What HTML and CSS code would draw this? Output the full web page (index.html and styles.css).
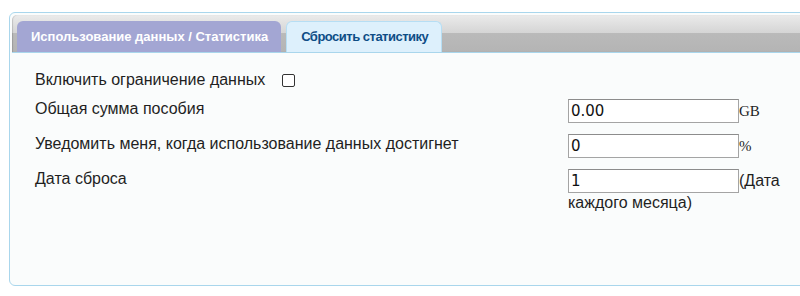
FILE: index.html
```html
<!DOCTYPE html>
<html lang="ru">
<head>
    <meta charset="UTF-8">
    <meta name="viewport" content="width=device-width, initial-scale=1.0">
    <title>Использование данных</title>
    <link rel="stylesheet" href="styles.css">
</head>
<body>
    <div class="panel">
        <div class="tab-bar">
            <a href="#" class="tab tab-active">Использование данных / Статистика</a>
            <a href="#" class="tab tab-plain">Сбросить статистику</a>
        </div>

        <form class="content">
            <div class="row row-first">
                <label class="row-label" for="limit">Включить ограничение данных <input type="checkbox" id="limit" class="check"></label>
                <div></div>
            </div>

            <div class="row">
                <label class="row-label" for="total">Общая сумма пособия</label>
                <div class="row-value"><input type="text" id="total" class="field" value="0.00"><span class="unit">GB</span></div>
            </div>

            <div class="row">
                <label class="row-label" for="notify">Уведомить меня, когда использование данных достигнет</label>
                <div class="row-value"><input type="text" id="notify" class="field" value="0"><span class="unit">%</span></div>
            </div>

            <div class="row">
                <label class="row-label" for="reset">Дата сброса</label>
                <div class="row-value"><input type="text" id="reset" class="field" value="1">(Дата каждого месяца)</div>
            </div>
        </form>
    </div>
</body>
</html>
```

FILE: styles.css
```css
* {
    margin: 0;
    padding: 0;
    box-sizing: border-box;
}

body {
    font-family: "Liberation Sans", Arial, sans-serif;
    background: #ffffff;
    color: #1f1f1f;
    overflow: hidden;
}

/* рамка панели */
.panel {
    width: 830px;
    height: 274px;
    margin: 12px 0 0 9px;
    padding: 2px;
    border: 1px solid #a9d6ec;
    border-radius: 6px;
    background: #fafcfc;
}

/* вкладки */
.tab-bar {
    height: 38px;
    display: flex;
    align-items: flex-end;
    gap: 5px;
    padding-left: 5px;
    border-radius: 5px 5px 0 0;
    border-bottom: 1px solid #a9d6ec;
    background: linear-gradient(#ebebeb, #d5d5d5 48%, #bababa 49%, #b4b4b4);
    box-shadow: inset 1px 0 1px rgba(0, 0, 0, 0.15);
}

.tab {
    height: 31px;
    line-height: 32px;
    padding: 0 13px 0 14px;
    border-radius: 6px 6px 0 0;
    font-size: 13px;
    font-weight: bold;
    text-decoration: none;
    white-space: nowrap;
}

.tab-active {
    background: #a3a6d3;
    color: #ffffff;
}

.tab-plain {
    background: #ddf0fc;
    color: #0e4d86;
    border: 1px solid #b6def4;
    border-bottom: none;
    line-height: 30px;
    letter-spacing: -0.5px;
}

/* форма */
.content {
    padding: 17px 0 0 23px;
}

.row {
    display: grid;
    grid-template-columns: 533px 222px;
    margin-bottom: 11px;
    font-size: 16px;
    line-height: 20px;
}

.row-first {
    margin-bottom: 9px;
}

.row-label {
    display: flex;
    align-items: center;
    gap: 17px;
    height: 20px;
}

.check {
    appearance: none;
    width: 13px;
    height: 13px;
    border: 1px solid #333333;
    border-radius: 2px;
    background: #ffffff;
}

.field {
    width: 171px;
    height: 24px;
    padding: 0 2px;
    border: 1px solid #a4a4a4;
    border-top-color: #8c8c8c;
    background: #ffffff;
    font-family: "DejaVu Sans", Verdana, sans-serif;
    font-size: 15px;
    color: #111111;
}

.unit {
    font-family: "Liberation Serif", "Times New Roman", serif;
    font-size: 15px;
}
```
